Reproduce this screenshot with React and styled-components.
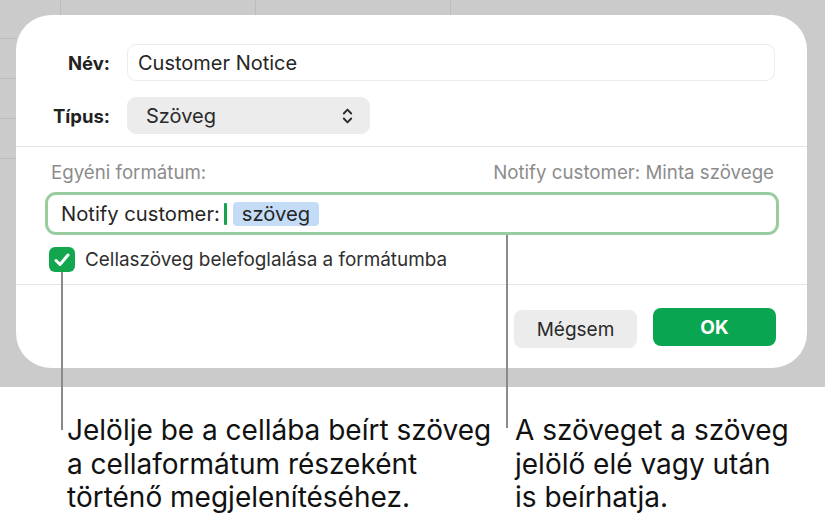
import React from "react";
import styled, { createGlobalStyle } from "styled-components";

const Global = createGlobalStyle`
  html, body { margin: 0; padding: 0; background: #ffffff; }
  body { font-family: Inter, "Liberation Sans", Arial, sans-serif; color: #262626; }
  * { box-sizing: border-box; }
`;

const Page = styled.div`
  position: relative;
  width: 825px;
  height: 519px;
  overflow: hidden;
  background: #ffffff;
`;

const Backdrop = styled.div`
  height: 387px;
  padding: 15px 18px 19px 16px;
  background-color: #cbcbcb;
  background-image:
    linear-gradient(#bcbcbc, #bcbcbc),
    linear-gradient(#bcbcbc, #bcbcbc),
    linear-gradient(#bcbcbc, #bcbcbc),
    linear-gradient(#bcbcbc, #bcbcbc),
    linear-gradient(#bcbcbc, #bcbcbc),
    linear-gradient(#bcbcbc, #bcbcbc),
    linear-gradient(#bcbcbc, #bcbcbc);
  background-repeat: no-repeat;
  background-size: 1px 20px, 1px 20px, 1px 20px, 16px 1px, 16px 1px, 16px 1px, 16px 1px;
  background-position: 60px 0, 255px 0, 450px 0, 0 38px, 0 78px, 0 118px, 0 158px;
`;

const Dialog = styled.div`
  width: 791px;
  height: 353px;
  background: #ffffff;
  border-radius: 35px;
  display: flex;
  flex-direction: column;
`;

const TopForm = styled.div`
  display: grid;
  grid-template-columns: 94px 1fr;
  column-gap: 17px;
  row-gap: 16px;
  align-items: center;
  padding: 29px 32px 12px 0;
`;

const Label = styled.div`
  text-align: right;
  font-weight: 700;
  font-size: 18.5px;
  color: #222222;
`;

const TextInput = styled.div`
  height: 37px;
  border: 1px solid #ececec;
  border-radius: 9px;
  display: flex;
  align-items: center;
  padding-left: 10px;
  font-size: 20px;
  color: #262626;
`;

const Select = styled.div`
  width: 243px;
  height: 37px;
  background: #ececec;
  border-radius: 9px;
  display: flex;
  align-items: center;
  justify-content: space-between;
  padding: 0 17px 0 19px;
  font-size: 20px;
  color: #2a2a2a;
`;

const Divider = styled.div`
  height: 1px;
  background: #e4e4e4;
`;

const FormatSection = styled.div`
  padding: 14px 28px 12px 29px;
  display: flex;
  flex-direction: column;
`;

const FormatHeader = styled.div`
  height: 22px;
  display: flex;
  align-items: center;
  justify-content: space-between;
  padding: 0 5px 0 6px;
  font-size: 18.7px;
  color: #8c8c8c;
`;

const FormatField = styled.div`
  margin-top: 9px;
  height: 43px;
  border: 3px solid #99cc9f;
  border-radius: 11px;
  display: flex;
  align-items: center;
  padding-left: 13px;
  font-size: 20.2px;
  color: #262626;
`;

const Caret = styled.span`
  display: inline-block;
  width: 3px;
  height: 22px;
  margin: 0 6px 0 4px;
  background: #17a24f;
  border-radius: 1px;
`;

const Token = styled.span`
  display: inline-flex;
  align-items: center;
  height: 24px;
  padding: 0 9px;
  background: #c5dcf7;
  border-radius: 4px;
`;

const CheckRow = styled.label`
  margin-top: 12px;
  display: flex;
  align-items: center;
  gap: 10px;
  padding-left: 4px;
  font-size: 18.9px;
  color: #2f2f2f;
`;

const CheckBox = styled.span`
  width: 26px;
  height: 25px;
  border-radius: 6px;
  background: #12a64f;
  display: flex;
  align-items: center;
  justify-content: center;
`;

const ButtonRow = styled.div`
  display: flex;
  justify-content: flex-end;
  gap: 16px;
  padding: 23px 31px 0 0;
`;

const Button = styled.button`
  width: 123px;
  height: 38px;
  border: none;
  border-radius: 8px;
  font-family: inherit;
  font-size: ${(p) => (p.$primary ? "19px" : "19px")};
  font-weight: ${(p) => (p.$primary ? 700 : 400)};
  color: ${(p) => (p.$primary ? "#ffffff" : "#2a2a2a")};
  background: ${(p) => (p.$primary ? "#0aa550" : "#ececec")};
  margin-top: ${(p) => (p.$primary ? "0" : "2px")};
`;

const Callouts = styled.div`
  display: grid;
  grid-template-columns: 448px 1fr;
  padding: 27px 0 0 67px;
`;

const CalloutText = styled.p`
  margin: 0;
  font-size: 28px;
  line-height: 33.5px;
  color: #111111;
`;

const Leader = styled.div`
  position: absolute;
  width: 2px;
  background: #8a8a8a;
`;

function Chevrons() {
  return (
    <svg width="11" height="20" viewBox="0 0 11 20" fill="none">
      <path d="M1.8 7.5 L5.5 3.6 L9.2 7.5" stroke="#2d2d2d" strokeWidth="1.9" strokeLinecap="round" strokeLinejoin="round" />
      <path d="M1.8 12.5 L5.5 16.4 L9.2 12.5" stroke="#2d2d2d" strokeWidth="1.9" strokeLinecap="round" strokeLinejoin="round" />
    </svg>
  );
}

function Check() {
  return (
    <svg width="18" height="16" viewBox="0 0 18 16" fill="none">
      <path d="M3 8.5 L7 12.5 L15 3" stroke="#ffffff" strokeWidth="3" strokeLinecap="round" strokeLinejoin="round" />
    </svg>
  );
}

export default function App() {
  return (
    <>
      <Global />
      <Page>
        <Backdrop>
          <Dialog>
            <TopForm>
              <Label>Név:</Label>
              <TextInput>Customer Notice</TextInput>
              <Label>Típus:</Label>
              <Select>
                <span>Szöveg</span>
                <Chevrons />
              </Select>
            </TopForm>
            <Divider />
            <FormatSection>
              <FormatHeader>
                <span>Egyéni formátum:</span>
                <span>Notify customer: Minta szövege</span>
              </FormatHeader>
              <FormatField>
                <span>Notify customer:</span>
                <Caret />
                <Token>szöveg</Token>
              </FormatField>
              <CheckRow>
                <CheckBox>
                  <Check />
                </CheckBox>
                <span>Cellaszöveg belefoglalása a formátumba</span>
              </CheckRow>
            </FormatSection>
            <Divider />
            <ButtonRow>
              <Button>Mégsem</Button>
              <Button $primary>OK</Button>
            </ButtonRow>
          </Dialog>
        </Backdrop>
        <Callouts>
          <CalloutText>
            Jelölje be a cellába beírt szöveg
            <br />a cellaformátum részeként
            <br />történő megjelenítéséhez.
          </CalloutText>
          <CalloutText>
            A szöveget a szöveg
            <br />jelölő elé vagy után
            <br />is beírhatja.
          </CalloutText>
        </Callouts>
        <Leader style={{ left: 61, top: 272, height: 158 }} />
        <Leader style={{ left: 506, top: 235, height: 193 }} />
      </Page>
    </>
  );
}
